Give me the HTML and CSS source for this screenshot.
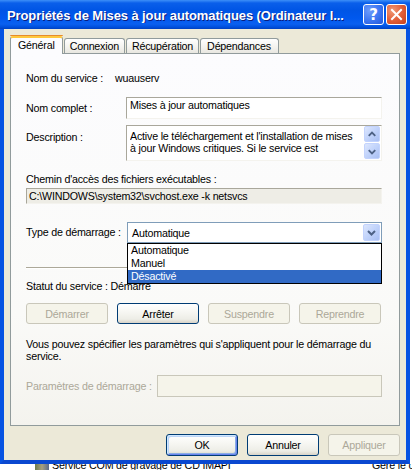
FILE: index.html
```html
<!DOCTYPE html>
<html lang="fr">
<head>
<meta charset="utf-8">
<title>Propriétés de Mises à jour automatiques</title>
<link rel="stylesheet" href="styles.css">
</head>
<body>
<div class="window">
  <div class="titlebar">
    <div class="title">Propriétés de Mises à jour automatiques (Ordinateur l...</div>
    <div class="tbtn help">?</div>
    <div class="tbtn close">
      <svg width="19" height="19" viewBox="0 0 19 19"><path d="M5 5 L14 14 M14 5 L5 14" stroke="#fff" stroke-width="2" stroke-linecap="square"/></svg>
    </div>
  </div>
  <div class="client">
    <div class="tabs">
      <div class="tab active">Général</div>
      <div class="tab">Connexion</div>
      <div class="tab">Récupération</div>
      <div class="tab tab-last">Dépendances</div>
    </div>
    <div class="panel">
      <div class="row-info">
        <span class="lbl-short">Nom du service :</span>
        <span>wuauserv</span>
      </div>
      <div class="field-row r-name">
        <span class="lbl lbl-name">Nom complet :</span>
        <div class="edit edit-name">Mises à jour automatiques</div>
      </div>
      <div class="field-row r-desc">
        <span class="lbl lbl-desc">Description :</span>
        <div class="edit edit-desc">
          <div class="desc-text">Active le téléchargement et l'installation de mises à jour Windows critiques. Si le service est</div>
          <div class="scrollbar">
            <div class="sbtn"><svg width="15" height="15" viewBox="0 0 15 15"><path d="M4 9 L7.5 5.5 L11 9" fill="none" stroke="#4D6185" stroke-width="2"/></svg></div>
            <div class="sbtn"><svg width="15" height="15" viewBox="0 0 15 15"><path d="M4 6 L7.5 9.5 L11 6" fill="none" stroke="#4D6185" stroke-width="2"/></svg></div>
          </div>
        </div>
      </div>
      <div class="path-label">Chemin d'accès des fichiers exécutables :</div>
      <div class="path-box">C:\WINDOWS\system32\svchost.exe -k netsvcs</div>
      <div class="field-row r-type">
        <span class="lbl lbl-type">Type de démarrage :</span>
        <div class="combo">
          <span class="combo-text">Automatique</span>
          <div class="combo-btn"><svg width="15" height="17" viewBox="0 0 15 17"><path d="M4 7 L7.5 10.5 L11 7" fill="none" stroke="#4D6185" stroke-width="2"/></svg></div>
        </div>
      </div>
      <div class="separator"></div>
      <div class="status">Statut du service : Démarré</div>
      <div class="svc-buttons">
        <button class="btn disabled">Démarrer</button>
        <button class="btn">Arrêter</button>
        <button class="btn disabled">Suspendre</button>
        <button class="btn disabled">Reprendre</button>
      </div>
      <p class="hint">Vous pouvez spécifier les paramètres qui s'appliquent pour le démarrage du service.</p>
      <div class="field-row r-param">
        <span class="lbl lbl-param">Paramètres de démarrage :</span>
        <div class="edit edit-param"></div>
      </div>
      <div class="dropdown">
        <div class="opt">Automatique</div>
        <div class="opt">Manuel</div>
        <div class="opt selected">Désactivé</div>
      </div>
    </div>
    <div class="actions">
      <button class="btn dlg default">OK</button>
      <button class="btn dlg">Annuler</button>
      <button class="btn dlg disabled">Appliquer</button>
    </div>
  </div>
</div>
<div class="behind">
  <div class="behind-inner">
    <span class="svc-icon"></span>
    <span class="svc-name">Service COM de gravage de CD IMAPI</span>
    <span class="svc-desc">Gère le c</span>
  </div>
</div>
</body>
</html>
```

FILE: styles.css
```css
html, body {
  margin: 0;
  padding: 0;
}
body {
  width: 412px;
  height: 470px;
  overflow: hidden;
  background: #ffffff;
  font-family: "Liberation Sans", Arial, sans-serif;
  font-size: 10.7px;
  letter-spacing: -0.2px;
  color: #000;
}

.window {
  width: 410px;
}

/* Title bar */
.titlebar {
  height: 29px;
  box-sizing: border-box;
  display: flex;
  align-items: center;
  padding: 0 3px 0 7px;
  background: linear-gradient(to bottom, #3D8FF8 0px, #0A5FEA 3px, #0055E5 10px, #0058EE 18px, #0A60F0 24px, #0050DD 27px, #0040C0 29px);
}
.title {
  flex: 1;
  font-family: "Liberation Sans", sans-serif;
  font-weight: bold;
  font-size: 13px;
  letter-spacing: -0.1px;
  color: #fff;
  text-shadow: 1px 1px 0 #0A1C7C;
  white-space: nowrap;
  overflow: hidden;
  padding-top: 1px;
}
.tbtn {
  width: 21px;
  height: 21px;
  box-sizing: border-box;
  border: 1px solid #fff;
  border-radius: 3px;
  margin-left: 2px;
  display: flex;
  align-items: center;
  justify-content: center;
  color: #fff;
}
.help {
  background: radial-gradient(circle at 30% 30%, #6E9CFB 0%, #3F78F2 50%, #2357DA 100%);
  font-family: "DejaVu Sans", sans-serif;
  font-weight: bold;
  font-size: 15px;
  letter-spacing: 0;
}
.close {
  background: radial-gradient(circle at 30% 30%, #F09A76 0%, #E2603A 50%, #C5401C 100%);
}

/* Client area */
.client {
  width: 410px;
  height: 435px;
  box-sizing: border-box;
  background: #ECE9D8;
  border-left: 4px solid #0753E2;
  border-right: 4px solid #0753E2;
  border-bottom: 4px solid #0A48D0;
  padding: 6px 6px 0 6px;
}

/* Tabs */
.tabs {
  display: flex;
  align-items: flex-end;
  height: 19px;
  margin-bottom: -1px;
  position: relative;
  z-index: 1;
}
.tab {
  height: 14px;
  line-height: 14px;
  padding: 0 5px;
  margin-bottom: 1px;
  margin-right: 1px;
  border: 1px solid #919B9C;
  border-bottom: none;
  border-radius: 3px 3px 0 0;
  background: linear-gradient(to bottom, #FFFFFF, #F3F2EE 60%, #E8E7E0);
  white-space: nowrap;
}
.tab-last {
  padding: 0 7px 0 6px;
}
.tab.active {
  height: 16px;
  line-height: 14px;
  margin-bottom: 0;
  padding: 0 7px;
  border-top: 2px solid #FFC83C;
  background: #FCFCFE;
  position: relative;
}
.tab.active::before {
  content: "";
  position: absolute;
  left: -1px;
  right: -1px;
  top: -3px;
  height: 1px;
  background: #E68B2C;
  border-radius: 2px 2px 0 0;
}

/* Panel */
.panel {
  position: relative;
  height: 353px;
  border: 1px solid #919B9C;
  background: linear-gradient(to bottom, #FCFCFE 0%, #FAFAF8 70%, #F4F3EE 100%);
  padding: 18px 17px 0 15px;
  box-sizing: content-box;
}
.row-info {
  display: flex;
  height: 13px;
  line-height: 13px;
}
.lbl-short {
  width: 89px;
}
.field-row {
  display: flex;
  align-items: flex-start;
}
.lbl {
  width: 100px;
  flex: none;
  line-height: 13px;
  white-space: nowrap;
}
.r-name { margin-top: 12px; }
.lbl-name { padding-top: 5px; }
.r-desc { margin-top: 6px; }
.lbl-desc { padding-top: 6px; }

.edit {
  flex: 1;
  box-sizing: border-box;
  border: 1px solid;
  border-color: #A9A79B #F4F3EE #F4F3EE #A9A79B;
  background: #fff;
  line-height: 13px;
}
.edit-name {
  height: 22px;
  padding: 1px 3px;
}
.edit-desc {
  height: 36px;
  display: flex;
  padding: 0 0 0 3px;
}
.desc-text {
  flex: 1;
  padding-top: 4px;
  padding-right: 4px;
  line-height: 12px;
  overflow: hidden;
}
.scrollbar {
  width: 17px;
  display: flex;
  flex-direction: column;
  gap: 1px;
}
.sbtn {
  width: 16px;
  height: 16px;
  box-sizing: border-box;
  border: 1px solid #C3D3FD;
  border-radius: 2px;
  background: linear-gradient(135deg, #DCE6FD 0%, #C1D3FB 50%, #A9BFF3 100%);
  display: flex;
  align-items: center;
  justify-content: center;
}

.path-label {
  margin-top: 12px;
  line-height: 13px;
}
.path-box {
  margin-top: 2px;
  height: 16px;
  box-sizing: border-box;
  border: 1px solid;
  border-color: #A9A79B #F4F3EE #F4F3EE #A9A79B;
  background: #EEEDE6;
  padding: 0 2px;
  line-height: 14px;
  white-space: nowrap;
}

.r-type {
  margin-top: 18px;
  align-items: center;
}
.lbl-type {
  width: 101px;
}
.combo {
  flex: 1;
  height: 21px;
  box-sizing: border-box;
  border: 1px solid #7F9DB9;
  background: #fff;
  display: flex;
  align-items: center;
  padding: 1px;
}
.combo-text {
  flex: 1;
  padding-left: 3px;
}
.combo-btn {
  width: 17px;
  height: 17px;
  box-sizing: border-box;
  border: 1px solid #C3D3FD;
  border-radius: 2px;
  background: linear-gradient(135deg, #DCE6FD 0%, #C1D3FB 50%, #A9BFF3 100%);
  display: flex;
  align-items: center;
  justify-content: center;
}

.separator {
  margin-top: 24px;
  height: 0;
  border-top: 1px solid #ACA899;
  border-bottom: 1px solid #fff;
}
.status {
  margin-top: 11px;
  line-height: 13px;
}

.svc-buttons {
  display: flex;
  gap: 9px;
  margin-top: 10px;
}
.btn {
  box-sizing: border-box;
  height: 21px;
  width: 82px;
  margin: 0;
  padding: 0;
  font-family: "Liberation Sans", Arial, sans-serif;
  font-size: 10.7px;
  letter-spacing: -0.2px;
  color: #000;
  border: 1px solid #003C74;
  border-radius: 3px;
  background: linear-gradient(to bottom, #FFFFFF 0%, #F7F7F3 40%, #EDEDE6 80%, #D8D3C8 100%);
}
.btn.disabled {
  color: #ACA899;
  border-color: #C9C7BA;
  background: #F5F4EA;
}

.hint {
  margin: 14px 0 0 0;
  line-height: 12px;
}

.r-param {
  margin-top: 13px;
  align-items: center;
}
.lbl-param {
  width: 131px;
  color: #ACA899;
}
.edit-param {
  height: 22px;
  border: 1px solid #C9C7BA;
  background: #F5F4EA;
}

/* Dropdown list overlay */
.dropdown {
  position: absolute;
  left: 116px;
  top: 189px;
  width: 255px;
  box-sizing: border-box;
  border: 1px solid #000;
  background: #fff;
  z-index: 2;
}
.opt {
  height: 13px;
  line-height: 13px;
  padding-left: 3px;
}
.opt.selected {
  background: #316AC5;
  color: #fff;
}

/* Bottom dialog buttons */
.actions {
  display: flex;
  justify-content: flex-end;
  gap: 9px;
  margin-top: 8px;
}
.btn.dlg {
  width: 72px;
  height: 22px;
}
.btn.default {
  box-shadow: inset 1px 1px 0 #CEE7FF, inset -1px -1px 0 #6982EE, inset 2px 2px 0 #BCD4F6, inset -2px -2px 0 #89ADE4;
}

/* Background window strip */
.behind {
  height: 6px;
  overflow: hidden;
  background: #fff;
}
.behind-inner {
  display: flex;
  align-items: center;
  margin-top: -5px;
  height: 13px;
  line-height: 13px;
  padding-left: 35px;
  white-space: nowrap;
}
.svc-icon {
  width: 14px;
  height: 10px;
  margin-right: 3px;
  flex: none;
  background: linear-gradient(to right, #6C7C4C, #A8A080 50%, #5A6A8A);
}
.svc-name {
  width: 320px;
  flex: none;
  overflow: hidden;
}
```
